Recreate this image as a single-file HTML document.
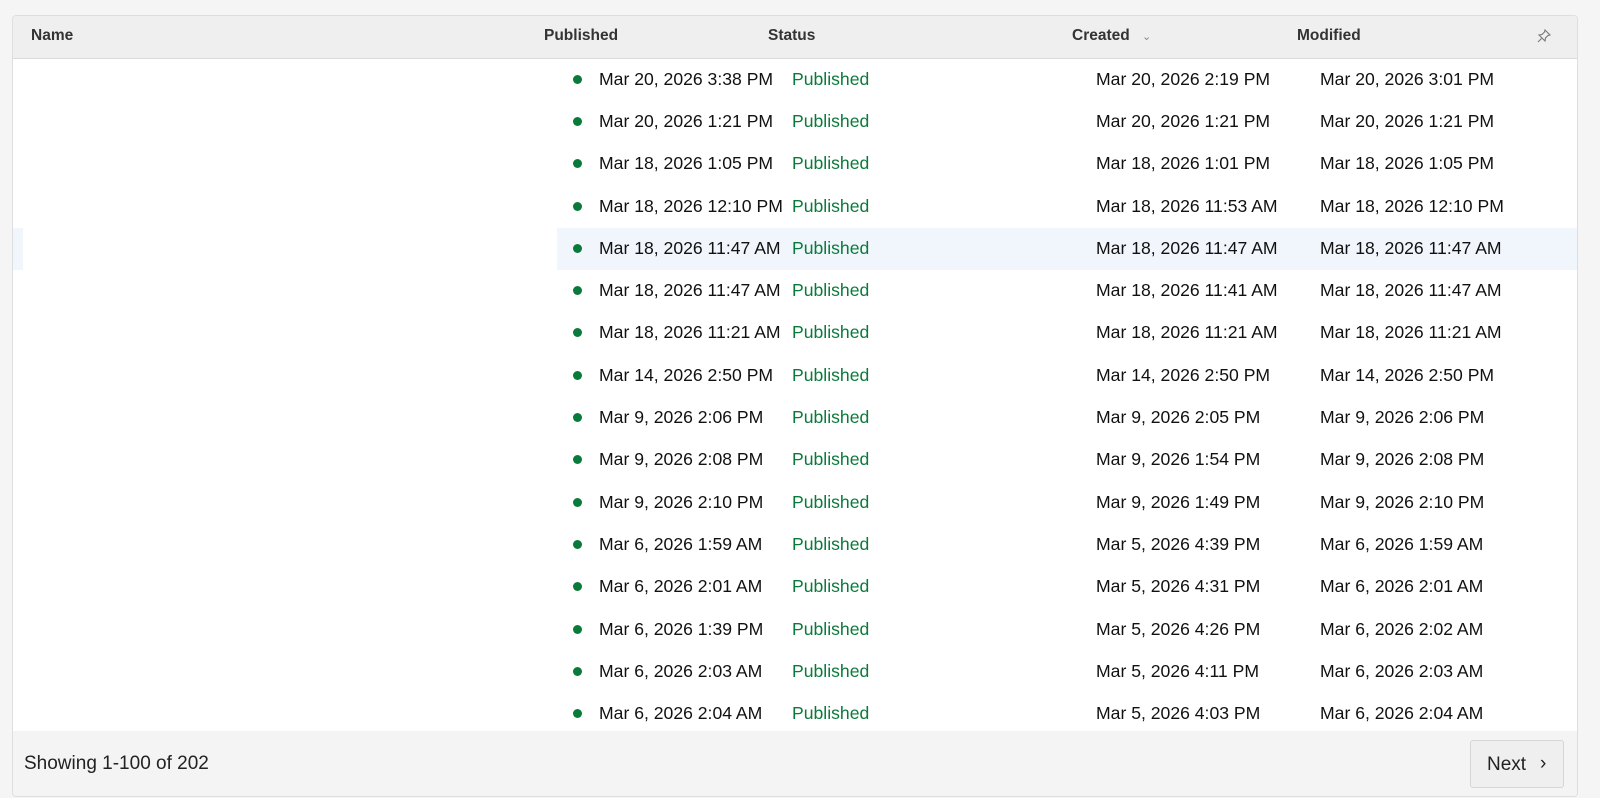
<!DOCTYPE html>
<html><head><style>
body{margin:0;width:1600px;height:798px;background:#f5f5f5;font-family:"Liberation Sans",sans-serif;position:relative;overflow:hidden}
.card{position:absolute;left:12px;top:15px;width:1566px;height:782px;border:1px solid #dedede;border-radius:4px;background:#fff;overflow:hidden;box-sizing:border-box}
.hdr{position:absolute;left:0;top:0;right:0;height:42px;background:#efefef;border-bottom:1px solid #dcdcdc;font-size:15.5px;font-weight:bold;color:#333}
.hdr span{position:absolute;top:11px}
.row{position:absolute;left:0;right:0;height:42.3px;font-size:17.6px;color:#111}
.row span{position:absolute;top:10px;white-space:nowrap;line-height:21px}
.dot{position:absolute;left:560px;top:16px;width:9px;height:9px;border-radius:50%;background:#0a7a3b}
.st{color:#0a7a3b}
.foot{position:absolute;left:0;right:0;top:715px;bottom:0;background:#f4f4f4}
.btn{position:absolute;left:1457px;top:9px;width:94px;height:48px;border:1px solid #d6d6d6;border-radius:3px;background:#efefef;font-size:19px;color:#222;box-sizing:border-box}
</style></head><body>
<div class="card">
<div class="hdr"><span style="left:18px">Name</span><span style="left:531px">Published</span><span style="left:755px">Status</span><span style="left:1059px">Created <span style="position:static;font-weight:normal;color:#888;font-size:11px;margin-left:8px">&#8964;</span></span><span style="left:1284px">Modified</span>
<svg style="position:absolute;left:1523px;top:12px" width="16" height="16" viewBox="0 0 16 16" fill="none" stroke="#777" stroke-width="1.1"><path d="M9 2l5 5-2 .5-2.5 2.5-.5 3-6-6 3-.5L8.5 4z M5.5 10.5L2 14"/></svg></div>
<div id="rows"></div>
<div class="foot"><span style="position:absolute;left:11px;top:22px;font-size:19px;color:#222">Showing 1-100 of 202</span><div class="btn"><span style="position:absolute;left:16px;top:13px">Next</span><span style="position:absolute;left:69px;top:12px">&#8250;</span></div></div>
</div>
<script>
var d=[["Mar 20, 2026 3:38 PM","Mar 20, 2026 2:19 PM","Mar 20, 2026 3:01 PM"],["Mar 20, 2026 1:21 PM","Mar 20, 2026 1:21 PM","Mar 20, 2026 1:21 PM"],["Mar 18, 2026 1:05 PM","Mar 18, 2026 1:01 PM","Mar 18, 2026 1:05 PM"],["Mar 18, 2026 12:10 PM","Mar 18, 2026 11:53 AM","Mar 18, 2026 12:10 PM"],["Mar 18, 2026 11:47 AM","Mar 18, 2026 11:47 AM","Mar 18, 2026 11:47 AM"],["Mar 18, 2026 11:47 AM","Mar 18, 2026 11:41 AM","Mar 18, 2026 11:47 AM"],["Mar 18, 2026 11:21 AM","Mar 18, 2026 11:21 AM","Mar 18, 2026 11:21 AM"],["Mar 14, 2026 2:50 PM","Mar 14, 2026 2:50 PM","Mar 14, 2026 2:50 PM"],["Mar 9, 2026 2:06 PM","Mar 9, 2026 2:05 PM","Mar 9, 2026 2:06 PM"],["Mar 9, 2026 2:08 PM","Mar 9, 2026 1:54 PM","Mar 9, 2026 2:08 PM"],["Mar 9, 2026 2:10 PM","Mar 9, 2026 1:49 PM","Mar 9, 2026 2:10 PM"],["Mar 6, 2026 1:59 AM","Mar 5, 2026 4:39 PM","Mar 6, 2026 1:59 AM"],["Mar 6, 2026 2:01 AM","Mar 5, 2026 4:31 PM","Mar 6, 2026 2:01 AM"],["Mar 6, 2026 1:39 PM","Mar 5, 2026 4:26 PM","Mar 6, 2026 2:02 AM"],["Mar 6, 2026 2:03 AM","Mar 5, 2026 4:11 PM","Mar 6, 2026 2:03 AM"],["Mar 6, 2026 2:04 AM","Mar 5, 2026 4:03 PM","Mar 6, 2026 2:04 AM"]];
var h="";d.forEach(function(r,i){var t=42.6+i*42.3;
var bg=i==4?'<div style="position:absolute;left:544px;right:0;top:0;bottom:0;background:#f0f6fb"></div><div style="position:absolute;left:0;width:10px;top:0;bottom:0;background:#f0f6fb"></div>':'';
h+='<div class="row" style="top:'+t+'px">'+bg+'<div class="dot"></div><span style="left:586px">'+r[0]+'</span><span class="st" style="left:779px">Published</span><span style="left:1083px">'+r[1]+'</span><span style="left:1307px">'+r[2]+'</span></div>';});
document.getElementById("rows").innerHTML=h;
</script>
</body></html>
